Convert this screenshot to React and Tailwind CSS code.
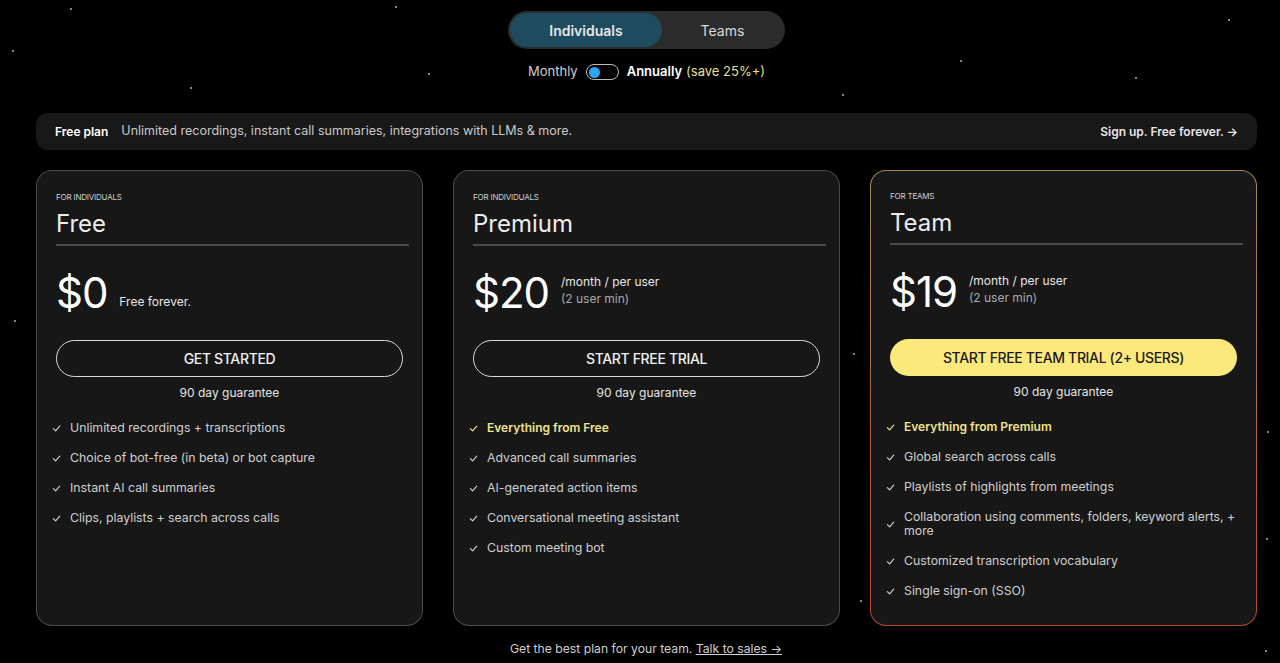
import React from 'react';

const stars = [
  [12, 50], [190, 87], [428, 73], [395, 6], [842, 94], [1135, 77], [853, 353], [14, 320],
  [1265, 650], [1266, 538], [1267, 431], [860, 600], [1228, 19], [650, 30], [960, 60], [70, 8],
];

const plans = [
  {
    tag: 'FOR INDIVIDUALS',
    name: 'Free',
    price: '$0',
    note: ['Free forever.'],
    cta: 'GET STARTED',
    highlight: null,
    features: [
      'Unlimited recordings + transcriptions',
      'Choice of bot-free (in beta) or bot capture',
      'Instant AI call summaries',
      'Clips, playlists + search across calls',
    ],
  },
  {
    tag: 'FOR INDIVIDUALS',
    name: 'Premium',
    price: '$20',
    note: ['/month / per user', '(2 user min)'],
    cta: 'START FREE TRIAL',
    highlight: 'Everything from Free',
    features: [
      'Advanced call summaries',
      'AI-generated action items',
      'Conversational meeting assistant',
      'Custom meeting bot',
    ],
  },
  {
    tag: 'FOR TEAMS',
    name: 'Team',
    price: '$19',
    note: ['/month / per user', '(2 user min)'],
    cta: 'START FREE TEAM TRIAL (2+ USERS)',
    highlight: 'Everything from Premium',
    team: true,
    features: [
      'Global search across calls',
      'Playlists of highlights from meetings',
      'Collaboration using comments, folders, keyword alerts, + more',
      'Customized transcription vocabulary',
      'Single sign-on (SSO)',
    ],
  },
];

function Check({ className }) {
  return (
    <svg viewBox="0 0 10 10" className={`w-[9px] h-[9px] shrink-0 ${className}`} fill="none">
      <path d="M1.5 5.2 L4 7.6 L8.6 2.4" stroke="currentColor" strokeWidth="1.3" strokeLinecap="round" strokeLinejoin="round" />
    </svg>
  );
}

function PlanCard({ plan }) {
  const inner = (
    <div className={`h-full rounded-[15px] bg-[#171717] pl-[19px] pr-[19px] flex flex-col ${plan.team ? 'pt-[21px]' : 'pt-[22px]'}`}>
      <div className="text-[8px] text-[#cfcfcf] tracking-tight leading-none">{plan.tag}</div>
      <div className="text-[24px] text-[#ececec] leading-none mt-[11px]">{plan.name}</div>
      <div className="h-[2px] bg-[#4a4a4a] mt-[8px] mr-[-6px]" />
      <div className="flex items-center mt-[23px] h-[48px]">
        <div className="text-[42px] text-white leading-none tracking-tight">{plan.price}</div>
        <div className={`ml-3 text-[12px] leading-[17px] ${plan.note.length === 1 ? 'mt-4' : 'mt-[-6px]'}`}>
          <div className="text-[#e6e6e6]">{plan.note[0]}</div>
          {plan.note[1] && <div className="text-[#a8a8a8]">{plan.note[1]}</div>}
        </div>
      </div>
      <button
        className={`mt-[23px] h-[37px] rounded-full text-[14px] font-medium tracking-tight ${
          plan.team ? 'bg-[#fbe97d] text-[#1a1a1a]' : 'border border-[#d9d9d9] text-[#f0f0f0]'
        }`}
      >
        {plan.cta}
      </button>
      <div className="text-center text-[12px] text-[#e4e4e4] mt-[7px]">90 day guarantee</div>
      <ul className="mt-[19px] ml-[-4px] flex flex-col gap-[16px]">
        {plan.highlight && (
          <li className="flex items-center gap-[9px] text-[12px] leading-[14px] font-semibold text-[#efe38a]">
            <Check className="text-[#efe38a]" />
            {plan.highlight}
          </li>
        )}
        {plan.features.map((f) => (
          <li key={f} className="flex items-center gap-[9px] text-[12.3px] leading-[14px] text-[#cfcfcf]">
            <Check className="text-[#cfcfcf]" />
            <span>{f}</span>
          </li>
        ))}
      </ul>
    </div>
  );

  if (plan.team) {
    return (
      <div className="h-[456px] rounded-[16px] p-px bg-gradient-to-b from-[#a08a4e] to-[#b3482c]">{inner}</div>
    );
  }
  return <div className="h-[456px] rounded-[16px] p-px bg-[#4a4a4a]">{inner}</div>;
}

export default function App() {
  return (
    <div
      className="relative w-[1280px] h-[663px] bg-black overflow-hidden text-white"
      style={{ fontFamily: 'Inter, "Noto Sans", sans-serif' }}
    >
      {stars.map(([x, y], i) => (
        <div key={i} className="absolute w-[2px] h-[2px] rounded-full bg-[#9fb7c9]" style={{ left: x, top: y }} />
      ))}

      <div className="relative flex flex-col items-center pt-[11px] pl-[13px]">
        <div className="flex w-[277px] h-[38px] rounded-full bg-[#2b2b2b] p-[2px]">
          <div className="w-[152px] rounded-full bg-[#1f4b5e] flex items-center justify-center text-[14px] font-semibold text-[#e5e5e5]">
            Individuals
          </div>
          <div className="flex-1 flex items-center justify-center text-[14px] text-[#d8d8d8]">Teams</div>
        </div>
        <div className="flex items-center mt-[15px] text-[13px] h-[16px]">
          <span className="text-[#cfcfcf]">Monthly</span>
          <div className="ml-2 w-[33px] h-[16px] rounded-full border border-[#bdbdbd] bg-black flex items-center px-[2px]">
            <div className="w-[11px] h-[11px] rounded-full bg-[#2aa7f0]" />
          </div>
          <span className="ml-2 font-semibold text-white">Annually</span>
          <span className="ml-1 text-[#e3df8a]">(save 25%+)</span>
        </div>
      </div>

      <div className="relative ml-[36px] w-[1221px] mt-[33px] h-[37px] rounded-[12px] bg-[#181818] flex items-center pl-[19px] pr-[19px]">
        <span className="text-[12px] font-semibold text-white">Free plan</span>
        <span className="ml-[13px] text-[12.5px] text-[#c9c9c9]">
          Unlimited recordings, instant call summaries, integrations with LLMs &amp; more.
        </span>
        <span className="ml-auto text-[12px] font-semibold text-[#e6e6e6]">Sign up. Free forever. →</span>
      </div>

      <div className="relative ml-[36px] w-[1221px] mt-[20px] grid grid-cols-3 gap-[30px]">
        {plans.map((p) => (
          <PlanCard key={p.name} plan={p} />
        ))}
      </div>

      <div className="relative text-center text-[12.2px] text-[#cfcfcf] mt-[14px] pl-[12px]">
        Get the best plan for your team. <span className="underline">Talk to sales →</span>
      </div>
    </div>
  );
}
